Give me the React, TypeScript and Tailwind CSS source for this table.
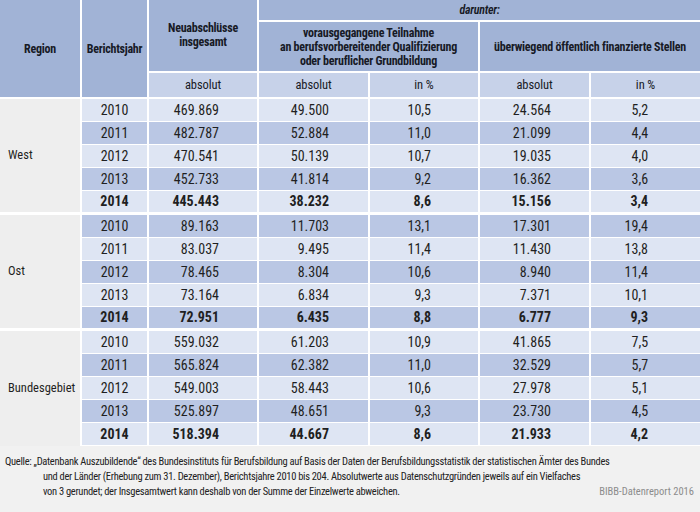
type Row = { year: string; total: string; vAbs: string; vPct: string; oAbs: string; oPct: string };

const groups: { region: string; rows: Row[] }[] = [
  {
    region: 'West',
    rows: [
      { year: '2010', total: '469.869', vAbs: '49.500', vPct: '10,5', oAbs: '24.564', oPct: '5,2' },
      { year: '2011', total: '482.787', vAbs: '52.884', vPct: '11,0', oAbs: '21.099', oPct: '4,4' },
      { year: '2012', total: '470.541', vAbs: '50.139', vPct: '10,7', oAbs: '19.035', oPct: '4,0' },
      { year: '2013', total: '452.733', vAbs: '41.814', vPct: '9,2', oAbs: '16.362', oPct: '3,6' },
      { year: '2014', total: '445.443', vAbs: '38.232', vPct: '8,6', oAbs: '15.156', oPct: '3,4' },
    ],
  },
  {
    region: 'Ost',
    rows: [
      { year: '2010', total: '89.163', vAbs: '11.703', vPct: '13,1', oAbs: '17.301', oPct: '19,4' },
      { year: '2011', total: '83.037', vAbs: '9.495', vPct: '11,4', oAbs: '11.430', oPct: '13,8' },
      { year: '2012', total: '78.465', vAbs: '8.304', vPct: '10,6', oAbs: '8.940', oPct: '11,4' },
      { year: '2013', total: '73.164', vAbs: '6.834', vPct: '9,3', oAbs: '7.371', oPct: '10,1' },
      { year: '2014', total: '72.951', vAbs: '6.435', vPct: '8,8', oAbs: '6.777', oPct: '9,3' },
    ],
  },
  {
    region: 'Bundesgebiet',
    rows: [
      { year: '2010', total: '559.032', vAbs: '61.203', vPct: '10,9', oAbs: '41.865', oPct: '7,5' },
      { year: '2011', total: '565.824', vAbs: '62.382', vPct: '11,0', oAbs: '32.529', oPct: '5,7' },
      { year: '2012', total: '549.003', vAbs: '58.443', vPct: '10,6', oAbs: '27.978', oPct: '5,1' },
      { year: '2013', total: '525.897', vAbs: '48.651', vPct: '9,3', oAbs: '23.730', oPct: '4,5' },
      { year: '2014', total: '518.394', vAbs: '44.667', vPct: '8,6', oAbs: '21.933', oPct: '4,2' },
    ],
  },
];

export default function App() {
  return (
    <div className="w-[700px] h-[512px] bg-[#f1f1f1] text-[#1f1f22] overflow-hidden font-['Roboto_Condensed','Liberation_Sans',sans-serif]">
      <table className="w-[700px] table-fixed border-separate border-spacing-0">
        <colgroup>
          <col className="w-[82px]" />
          <col className="w-[67px]" />
          <col className="w-[110px]" />
          <col className="w-[111px]" />
          <col className="w-[110px]" />
          <col className="w-[111px]" />
          <col className="w-[109px]" />
        </colgroup>
        <thead className="text-[12px] font-bold tracking-[-0.25px] text-[#171a26]">
          <tr>
            <th rowSpan={3} className="bg-[#a1b3d6] border-r-2 border-b-2 border-white">Region</th>
            <th rowSpan={3} className="bg-[#a1b3d6] border-r-2 border-b-2 border-white">Berichtsjahr</th>
            <th rowSpan={2} className="bg-[#a1b3d6] border-r-2 border-b-2 border-white leading-[14px] pb-[1px]">
              Neuabschlüsse
              <br />
              insgesamt
            </th>
            <th colSpan={4} className="h-[22px] bg-[#a1b3d6] border-b-2 border-white italic font-semibold">darunter:</th>
          </tr>
          <tr>
            <th colSpan={2} className="h-[51px] bg-[#a1b3d6] border-r-2 border-b-2 border-white leading-[14px]">
              vorausgegangene Teilnahme
              <br />
              an berufsvorbereitender Qualifizierung
              <br />
              oder beruflicher Grundbildung
            </th>
            <th colSpan={2} className="bg-[#a1b3d6] border-b-2 border-white">überwiegend öffentlich finanzierte Stellen</th>
          </tr>
          <tr className="text-[12.5px] tracking-[-0.1px]">
            <th className="h-[26px] bg-[#c7d2e9] border-r-2 border-b-2 border-white font-normal">absolut</th>
            <th className="bg-[#c7d2e9] border-r-2 border-b-2 border-white font-normal">absolut</th>
            <th className="bg-[#c7d2e9] border-r-2 border-b-2 border-white font-normal">in %</th>
            <th className="bg-[#c7d2e9] border-r-2 border-b-2 border-white font-normal">absolut</th>
            <th className="bg-[#c7d2e9] border-b-2 border-white font-normal">in %</th>
          </tr>
        </thead>
        <tbody className="text-[14px]">
          {groups.map((g, gi) =>
            g.rows.map((r, ri) => {
              const idx = gi * 5 + ri;
              const bg = idx % 2 === 0 ? 'bg-[#dee5f3]' : 'bg-[#bac7e4]';
              const groupEnd = ri === 4 && gi < 2;
              const bottom = groupEnd ? 'h-[24px] border-b-[3px]' : 'h-[23px] border-b';
              const weight = r.year === '2014' ? 'font-bold' : '';
              return (
                <tr key={g.region + r.year} className={weight}>
                  {ri === 0 && (
                    <td
                      rowSpan={5}
                      className={`bg-[#eeeeee] border-r-2 border-white pl-[8px] text-[12.5px] font-normal ${gi < 2 ? 'border-b-[3px]' : ''}`}
                    >
                      {g.region}
                    </td>
                  )}
                  <td className={`${bg} ${bottom} border-r-2 border-white text-center`}>{r.year}</td>
                  <td className={`${bg} ${bottom} border-r-2 border-white text-right pr-[38px]`}>{r.total}</td>
                  <td className={`${bg} ${bottom} border-r-2 border-white text-right pr-[39px]`}>{r.vAbs}</td>
                  <td className={`${bg} ${bottom} border-r-2 border-white text-right pr-[47px]`}>{r.vPct}</td>
                  <td className={`${bg} ${bottom} border-r-2 border-white text-right pr-[38px]`}>{r.oAbs}</td>
                  <td className={`${bg} ${bottom} border-white text-right pr-[52px]`}>{r.oPct}</td>
                </tr>
              );
            })
          )}
        </tbody>
      </table>
      <div className="pt-[8px] pl-[5px] pr-[6px] text-[10.5px] leading-[15px] tracking-[-0.3px] text-[#222]">
        <div>Quelle: „Datenbank Auszubildende“ des Bundesinstituts für Berufsbildung auf Basis der Daten der Berufsbildungsstatistik der statistischen Ämter des Bundes</div>
        <div className="pl-[38px]">und der Länder (Erhebung zum 31. Dezember), Berichtsjahre 2010 bis 204. Absolutwerte aus Datenschutzgründen jeweils auf ein Vielfaches</div>
        <div className="pl-[38px] flex justify-between">
          <span>von 3 gerundet; der Insgesamtwert kann deshalb von der Summe der Einzelwerte abweichen.</span>
          <span className="text-[#8c8c8c] tracking-[0px]">BIBB-Datenreport 2016</span>
        </div>
      </div>
    </div>
  );
}
